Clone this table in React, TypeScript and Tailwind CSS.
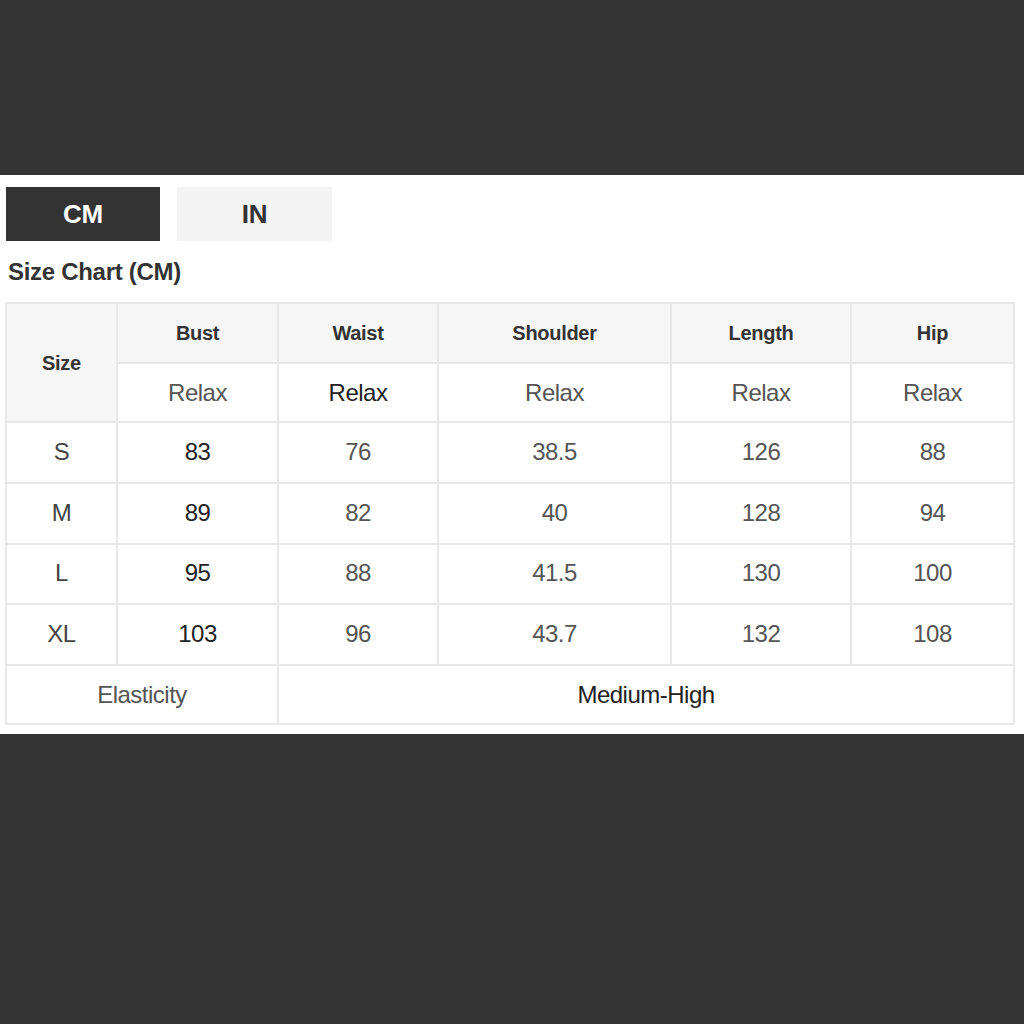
const COLS = ['Bust', 'Waist', 'Shoulder', 'Length', 'Hip'];

const ROWS = [
  { size: 'S', h: 'h-[61px]', vals: ['83', '76', '38.5', '126', '88'] },
  { size: 'M', h: 'h-[61px]', vals: ['89', '82', '40', '128', '94'] },
  { size: 'L', h: 'h-[60px]', vals: ['95', '88', '41.5', '130', '100'] },
  { size: 'XL', h: 'h-[61px]', vals: ['103', '96', '43.7', '132', '108'] },
];

const cell = 'border-2 border-[#e8e8e8] text-center align-middle p-0';

export default function App() {
  return (
    <div className="min-h-[1024px] bg-[#333333] font-['Liberation_Sans',Arial,sans-serif]">
      <div className="h-[175px]" />

      <div className="bg-white h-[559px] pl-[6px] pt-[12px]">
        {/* Unit tabs */}
        <div className="flex gap-[17px]">
          <button className="w-[154px] h-[54px] bg-[#333333] text-white text-[26px] font-bold tracking-[-0.3px]">
            CM
          </button>
          <button className="w-[155px] h-[54px] bg-[#f4f4f4] text-[#333] text-[26px] font-bold tracking-[-0.3px]">
            IN
          </button>
        </div>

        <h2 className="mt-[7px] ml-[2px] h-[48px] flex items-center text-[24px] font-bold text-[#333] tracking-[-0.3px] leading-none">
          Size Chart (CM)
        </h2>

        {/* Table */}
        <table className="border-collapse table-fixed w-[1008px] mt-[6px] -ml-px">
          <colgroup>
            <col className="w-[111px]" />
            <col className="w-[161px]" />
            <col className="w-[160px]" />
            <col className="w-[233px]" />
            <col className="w-[180px]" />
            <col className="w-[163px]" />
          </colgroup>
          <tbody>
            <tr className="h-[60px] bg-[#f6f6f6]">
              <td rowSpan={2} className={`${cell} text-[20px] font-bold text-[#333] tracking-[-0.3px]`}>
                Size
              </td>
              {COLS.map(c => (
                <td key={c} className={`${cell} text-[20px] font-bold text-[#333] tracking-[-0.3px]`}>
                  {c}
                </td>
              ))}
            </tr>
            <tr className="h-[59px]">
              {COLS.map((c, i) => (
                <td
                  key={c}
                  className={`${cell} bg-white text-[24px] tracking-[-0.5px] ${i === 1 ? 'text-[#222]' : 'text-[#555]'}`}
                >
                  Relax
                </td>
              ))}
            </tr>
            {ROWS.map(r => (
              <tr key={r.size} className={r.h}>
                <td className={`${cell} text-[24px] text-[#444] tracking-[-0.5px] pb-[2px]`}>{r.size}</td>
                {r.vals.map((v, i) => (
                  <td
                    key={i}
                    className={`${cell} text-[24px] tracking-[-0.5px] pb-[2px] ${i === 0 ? 'text-[#222]' : 'text-[#555]'}`}
                  >
                    {v}
                  </td>
                ))}
              </tr>
            ))}
            <tr className="h-[59px]">
              <td colSpan={2} className={`${cell} text-[24px] text-[#555] tracking-[-0.5px]`}>
                Elasticity
              </td>
              <td colSpan={4} className={`${cell} text-[24px] text-[#222] tracking-[-0.5px]`}>
                Medium-High
              </td>
            </tr>
          </tbody>
        </table>
      </div>
    </div>
  );
}
